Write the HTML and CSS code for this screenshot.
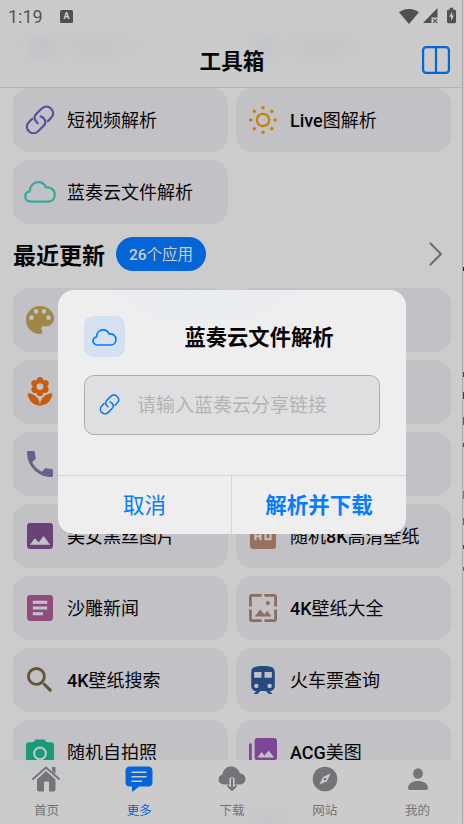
FILE: index.html
```html
<!DOCTYPE html>
<html lang="zh-CN">
<head>
<meta charset="utf-8">
<title>工具箱</title>
<link rel="stylesheet" href="styles.css">
</head>
<body>
<svg class="defs" aria-hidden="true">
  <symbol id="link" viewBox="0 0 30 30"><g fill="none" stroke="currentColor" stroke-width="2.200" stroke-linecap="round" stroke-linejoin="round"><path d="M12.7 18.2 10.9 16.1C8.7 13.5 9.4 10.8 11.4 8.8L16.5 3.7C19.2 1 23.1.8 25.9 3.5 28.8 6.3 28.8 10.1 26.2 12.8L22.9 16.1"/><path d="M7.2 13.8 3.8 17.2C1.1 19.9 1.2 23.7 3.9 26.3 6.6 28.9 10.5 28.9 13.2 26.2L18.4 21C20.8 18.6 21 15.8 18.8 13.4 17.8 12.3 17 11.6 15.6 11.4"/></g></symbol>
  <symbol id="cloud" viewBox="0 0 32 22"><path d="M7.5 20.7C3.8 20.7 1.2 18.7 1.2 15.5 1.2 12.8 3 10.9 5.7 10.4 5.8 5 9.4 1.2 14.3 1.2 18.1 1.2 20.7 3.3 22 6.5 27 5.9 30.8 8.9 30.8 13.5 30.8 17.8 27.9 20.7 23.9 20.7Z" fill="none" stroke="currentColor" stroke-width="2.200" stroke-linejoin="round"/></symbol>
  <symbol id="sun" viewBox="0 0 30 30"><circle cx="15" cy="15" r="6.2" fill="none" stroke="currentColor" stroke-width="2.200"/><g fill="currentColor"><circle cx="15" cy="2.7" r="1.8"/><circle cx="15" cy="27.3" r="1.8"/><circle cx="2.7" cy="15" r="1.8"/><circle cx="27.3" cy="15" r="1.8"/><circle cx="6.3" cy="6.3" r="1.8"/><circle cx="23.7" cy="6.3" r="1.8"/><circle cx="6.3" cy="23.7" r="1.8"/><circle cx="23.7" cy="23.7" r="1.8"/></g></symbol>
  <symbol id="palette" viewBox="3 3 18 18"><path fill="currentColor" d="M12 3a9 9 0 0 0 0 18c.83 0 1.5-.67 1.5-1.500 0-.39-.15-.74-.39-1.010-.23-.26-.38-.61-.38-.99 0-.83.67-1.500 1.500-1.500H16c2.760 0 5-2.240 5-5 0-4.420-4.030-8-9-8zm-5.500 9a1.500 1.500 0 1 1 0-3 1.500 1.500 0 0 1 0 3zm3-4a1.500 1.500 0 1 1 0-3 1.500 1.500 0 0 1 0 3zm5 0a1.500 1.500 0 1 1 0-3 1.500 1.500 0 0 1 0 3zm3 4a1.500 1.500 0 1 1 0-3 1.500 1.500 0 0 1 0 3z"/></symbol>
  <symbol id="flower" viewBox="2.500 1 19 22"><path fill="currentColor" d="M12 22c4.970 0 9-4.030 9-9-4.970 0-9 4.030-9 9zM5.600 10.250c0 1.380 1.120 2.500 2.500 2.500.53 0 1.010-.16 1.420-.44l-.02.19c0 1.380 1.120 2.500 2.500 2.500s2.500-1.120 2.500-2.500l-.02-.19c.4.280.89.440 1.420.440 1.380 0 2.500-1.120 2.500-2.500 0-1-.59-1.850-1.430-2.250.84-.4 1.430-1.250 1.430-2.250 0-1.380-1.120-2.500-2.500-2.500-.53 0-1.010.16-1.420.44l.02-.19C14.500 2.120 13.380 1 12 1S9.500 2.120 9.500 3.500l.02.19c-.4-.28-.89-.44-1.420-.44-1.380 0-2.500 1.120-2.500 2.500 0 1 .59 1.850 1.430 2.250-.84.4-1.430 1.250-1.430 2.250zM12 5.500a2.500 2.500 0 1 1 0 5 2.500 2.500 0 0 1 0-5zM3 13c0 4.970 4.030 9 9 9 0-4.970-4.030-9-9-9z"/></symbol>
  <symbol id="phone" viewBox="3 3 18 18"><path fill="currentColor" d="M6.620 10.790c1.440 2.830 3.760 5.140 6.590 6.590l2.200-2.200c.27-.27.67-.36 1.020-.24 1.120.37 2.330.57 3.570.57.55 0 1 .45 1 1V20c0 .55-.45 1-1 1C10.610 21 3 13.390 3 4c0-.55.450-1 1-1h3.500c.55 0 1 .45 1 1 0 1.250.2 2.450.57 3.570.11.350.030.740-.25 1.020z"/></symbol>
  <symbol id="image" viewBox="3 3 18 18"><path fill="currentColor" d="M21 19V5c0-1.100-.9-2-2-2H5c-1.100 0-2 .9-2 2v14c0 1.100.9 2 2 2h14c1.100 0 2-.9 2-2zM8.500 13.500l2.500 3.010L14.500 12l4.500 6H5z"/></symbol>
  <symbol id="hd" viewBox="3 3 18 18"><path fill="currentColor" fill-rule="evenodd" d="M19 3H5a2 2 0 0 0-2 2v14c0 1.100.9 2 2 2h14a2 2 0 0 0 2-2V5a2 2 0 0 0-2-2zM11 15H9.500v-2h-2v2H6V9h1.500v2.500h2V9H11zm2-6h4a1 1 0 0 1 1 1v4a1 1 0 0 1-1 1h-4zm1.500 4.500h2v-3h-2z"/></symbol>
  <symbol id="article" viewBox="3 3 18 18"><path fill="currentColor" d="M19 3H5c-1.100 0-2 .9-2 2v14c0 1.100.9 2 2 2h14c1.100 0 2-.9 2-2V5c0-1.100-.9-2-2-2zM14 17H7v-2h7zm3-4H7v-2h10zm0-4H7V7h10z"/></symbol>
  <symbol id="wallpaper" viewBox="2 2 20 20"><path fill="currentColor" d="M4 4h7V2H4c-1.100 0-2 .9-2 2v7h2zm6 9-4 5h12l-3-4-2.030 2.710zm7-4.500a1.500 1.500 0 1 0-3 0 1.500 1.500 0 0 0 3 0zM20 2h-7v2h7v7h2V4c0-1.100-.9-2-2-2zm0 18h-7v2h7c1.100 0 2-.9 2-2v-7h-2zM4 13H2v7c0 1.100.9 2 2 2h7v-2H4z"/></symbol>
  <symbol id="search" viewBox="3 3 18 18"><path fill="currentColor" d="M15.500 14h-.79l-.28-.27A6.470 6.470 0 0 0 16 9.500 6.500 6.500 0 1 0 9.500 16c1.610 0 3.090-.59 4.230-1.570l.27.28v.79l5 4.990L20.490 19zm-6 0a4.500 4.500 0 1 1 0-9 4.500 4.500 0 0 1 0 9z"/></symbol>
  <symbol id="train" viewBox="4 2 16 19"><path fill="currentColor" d="M12 2c-4.420 0-8 .5-8 4v9.500C4 17.430 5.570 19 7.500 19L6 20.500v.5h2.230l2-2H14l2 2h2v-.5L16.500 19c1.930 0 3.500-1.570 3.500-3.500V6c0-3.500-3.580-4-8-4zM7.500 17a1.500 1.500 0 1 1 0-3 1.500 1.500 0 0 1 0 3zM11 10H6V6h5zm2 0V6h5v4zm3.500 7a1.500 1.500 0 1 1 0-3 1.500 1.500 0 0 1 0 3z"/></symbol>
  <symbol id="camera" viewBox="2 2 20 18"><path fill="currentColor" fill-rule="evenodd" d="M9 2 7.170 4H4c-1.100 0-2 .9-2 2v12c0 1.100.9 2 2 2h16c1.100 0 2-.9 2-2V6c0-1.100-.9-2-2-2h-3.170L15 2zm3 15a5 5 0 1 1 0-10 5 5 0 0 1 0 10z"/><circle cx="12" cy="12" r="3.400" fill="currentColor"/></symbol>
  <symbol id="album" viewBox="2 2 20 20"><path fill="currentColor" d="M22 16V4c0-1.100-.9-2-2-2H8c-1.100 0-2 .9-2 2v12c0 1.100.9 2 2 2h12c1.100 0 2-.9 2-2zm-11-4 2.030 2.710L16 11l4 5H8zM2 6v14c0 1.100.9 2 2 2h14v-2H4V6z"/></symbol>
</svg>
<div class="device">
  <div class="screen">
    <header>
      <div class="status">
        <span class="time">1:19</span>
        <span class="input-mode">A</span>
        <svg class="wifi" viewBox="0 0 20 15"><path fill="#505050" d="M0 3.200C5.600-1.100 14.400-1.100 20 3.200L10 15z"/></svg>
        <svg class="signal" viewBox="0 0 16 16"><path fill="#505050" d="M14.500 0V9.500H8.500V15H0z"/><path stroke="#606060" stroke-width="1.200" d="M10.200 11l4 4m0-4l-4 4"/></svg>
        <svg class="battery" viewBox="0 0 10 17"><path fill="#505050" d="M3 0h4v2h1.500Q10 2 10 3.500v12Q10 17 8.500 17h-7Q0 17 0 15.500v-12Q0 2 1.500 2H3z"/><path fill="#ccc" d="M5.800 4 2.500 10h2v4.500l3.200-6H5.800z"/></svg>
      </div>
      <div class="titlebar">
        <h1>工具箱</h1>
        <svg class="columns" viewBox="0 0 28 28"><g fill="none" stroke="#0365d6" stroke-width="2.200"><rect x="1.100" y="1.100" width="25.800" height="25.800" rx="3.200"/><path d="M14 1v26"/></g></svg>
      </div>
    </header>
    <main>
      <div class="grid">
        <div class="card"><svg class="ic i30 indigo"><use href="#link"/></svg><span>短视频解析</span></div>
        <div class="card"><svg class="ic i30 amber"><use href="#sun"/></svg><span><b>Live</b>图解析</span></div>
        <div class="card"><svg class="ic icloud teal"><use href="#cloud"/></svg><span>蓝奏云文件解析</span></div>
      </div>
      <div class="section">
        <h2>最近更新</h2><span class="count"><b>26</b>个应用</span>
        <svg class="chevron" viewBox="0 0 14 24"><path d="M1.500 1.500 12 12 1.500 22.500" fill="none" stroke="#707074" stroke-width="2.200" stroke-linecap="round" stroke-linejoin="round"/></svg>
      </div>
      <div class="grid">
        <div class="card"><svg class="ic i28 gold"><use href="#palette"/></svg></div>
        <div class="card"></div>
        <div class="card"><svg class="ic iflower orange"><use href="#flower"/></svg></div>
        <div class="card"></div>
        <div class="card"><svg class="ic i26 violet"><use href="#phone"/></svg></div>
        <div class="card"></div>
        <div class="card"><svg class="ic i26 plum"><use href="#image"/></svg><span>美女黑丝图片</span></div>
        <div class="card"><svg class="ic i26 brown"><use href="#hd"/></svg><span>随机<b>8K</b>高清壁纸</span></div>
        <div class="card"><svg class="ic i26 pink"><use href="#article"/></svg><span>沙雕新闻</span></div>
        <div class="card"><svg class="ic i28 taupe"><use href="#wallpaper"/></svg><span><b>4K</b>壁纸大全</span></div>
        <div class="card"><svg class="ic i26 olive"><use href="#search"/></svg><span><b>4K</b>壁纸搜索</span></div>
        <div class="card"><svg class="ic itrain navy"><use href="#train"/></svg><span>火车票查询</span></div>
        <div class="card"><svg class="ic icamera green"><use href="#camera"/></svg><span>随机自拍照</span></div>
        <div class="card"><svg class="ic i28 purple"><use href="#album"/></svg><span><b>ACG</b>美图</span></div>
      </div>
    </main>
    <nav>
      <a><svg viewBox="0 0 28 26"><path d="M1 13 14 1.500 27 13" fill="none" stroke="currentColor" stroke-width="1.900" stroke-linecap="round" stroke-linejoin="round"/><path fill="currentColor" d="M20 1h3.500v7L20 5zM14 5l9.500 8.500V23q0 2.500-2.500 2.500h-4V16.500q0-1-1-1h-3q-1 0-1 1v9H7.500Q5 25.500 5 23V13.500z"/></svg>首页</a>
      <a class="active"><svg viewBox="0 0 28 26"><path fill="currentColor" d="M5 .5h18Q27.500.5 27.500 5v11q0 4.500-4.500 4.500h-9L8 25.500q-1 .3-1-1v-4H5Q.5 20.500.5 16V5Q.5.500 5 .5z"/><path d="M7 6.200h14M7 10.800h14M7 15.300h9.500" stroke="#ccc" stroke-width="1.400" stroke-linecap="round"/></svg>更多</a>
      <a><svg viewBox="0 0 28 26"><path fill="currentColor" d="M6.500 18.500C2.500 18.500.5 16.200.5 13.300.5 10.800 2 9 4.400 8.400 5.200 3.600 8.600.5 13 .5c4.500 0 7.700 2.700 9 7 3.400.3 5.500 2.500 5.500 5.500s-2.400 5.500-6 5.500h-5v-6.200q0-1-2.500-1t-2.500 1v6.200z"/><path d="M14 13v11m-4-4 4 4 4-4" fill="none" stroke="currentColor" stroke-width="2" stroke-linecap="round" stroke-linejoin="round"/></svg>下载</a>
      <a><svg viewBox="0 0 28 26"><circle cx="14" cy="13" r="12.300" fill="currentColor"/><path fill="#ccc" fill-rule="evenodd" d="M19.500 7.500 16 15.200 8.500 18.500 12 11zM14 11.700a1.400 1.400 0 1 0 0 2.800 1.400 1.400 0 0 0 0-2.800z"/></svg>网站</a>
      <a><svg viewBox="0 0 28 26"><ellipse cx="14" cy="7.500" rx="4.900" ry="5.300" fill="currentColor"/><path fill="currentColor" d="M4 21.500C4.600 17.300 8.500 15 14 15s9.400 2.300 10 6.500q.2 2.500-2 2.500H6q-2.200 0-2-2.500z"/></svg>我的</a>
    </nav>
    <section class="dialog" role="dialog">
      <div class="dialog-body">
        <div class="dialog-head">
          <span class="tile"><svg><use href="#cloud"/></svg></span>
          <h3>蓝奏云文件解析</h3>
        </div>
        <div class="field"><svg><use href="#link"/></svg><span>请输入蓝奏云分享链接</span></div>
      </div>
      <div class="actions"><button>取消</button><button class="primary">解析并下载</button></div>
    </section>
  </div>
  <div class="edge"></div>
</div>
</body>
</html>
```
FILE: styles.css
```css
* { box-sizing: border-box; margin: 0; }
body { width: 464px; height: 824px; overflow: hidden; background: #ccc; color: #060608; font-family: Roboto, "Noto Sans CJK SC", sans-serif; }
b { font-weight: 500; }
.defs { position: absolute; width: 0; height: 0; }
svg { display: block; flex: none; }
.device { display: flex; height: 824px; }
.screen { position: relative; display: flex; flex-direction: column; width: 462px; height: 824px; overflow: hidden; background: #ccc; }
.edge { width: 2px; border-left: 1px solid #aaa; background: linear-gradient(#ccc 267px, #222 267px 271px, #ccc 271px 372px, #444 372px 377px, #ccc 377px 392px, #24456f 392px 399px, #ccc 399px 417px, #75438c 417px 425px, #ccc 425px 443px, #46468a 443px 447px, #ccc 447px 491px, #7a68a8 491px 499px, #ccc 499px 518px, #378b45 518px 525px, #ccc 525px 545px, #3c4076 545px 549px, #ccc 549px 567px, #835f4c 567px 571px, #ccc 571px); }

header { height: 88px; flex: none; border-bottom: 1px solid #b5b5b7; background: radial-gradient(ellipse 27px 24px at 40px 47px, #c6c2c8, transparent), radial-gradient(ellipse 65px 22px at 95px 47px, #c5c5c6, transparent), radial-gradient(ellipse 25px 24px at 264px 47px, #c1c5ca, transparent), radial-gradient(ellipse 60px 22px at 322px 47px, #c5c5c6, transparent), #cbcbcb; }
.status { display: flex; align-items: center; height: 32px; padding: 0 6px 0 8px; color: #555; }
.time { width: 52px; font-size: 18px; }
.input-mode { width: 13px; height: 13px; margin-right: auto; border-radius: 1.500px; background: #505050; color: #d5d5d5; font: 700 9px/13px Roboto, sans-serif; text-align: center; }
.wifi { width: 20px; height: 15px; margin-right: 4px; }
.signal { width: 16px; height: 16px; margin-right: 8px; }
.battery { width: 9px; height: 17px; margin-top: -2px; }
.titlebar { display: grid; grid-template-columns: 28px 1fr 28px; align-items: center; height: 56px; padding: 0 12px 0 14px; }
h1 { grid-column: 2; padding-top: 3px; font-size: 21.600px; line-height: 33px; text-align: center; }
.columns { width: 28px; height: 28px; margin-left: -.500px; }

main { flex: none; height: 672px; overflow: hidden; padding: 0 11px 0 13px; }
.grid { display: grid; grid-template-columns: 215px 215px; grid-auto-rows: 64px; gap: 8px; }
.card { display: flex; align-items: center; gap: 11px; padding-left: 11px; border-radius: 16px; background: #c2c1c6; font-size: 18px; }
.card span { padding-top: 2px; line-height: 26px; white-space: nowrap; }
.ic { width: 26px; height: 26px; margin: 0 3px; }
.i30 { width: 30px; height: 30px; margin: 0 1px; }
.i28 { width: 28px; height: 28px; margin: 0 2px; }
.icloud { width: 32px; height: 22px; margin: 0; }
.iflower { width: 26px; height: 30px; }
.itrain { width: 24px; height: 28px; margin: 0 4px; }
.icamera { width: 28px; height: 26px; margin: 0 2px; }
.indigo { color: #4c559f; } .amber { color: #c9810c; } .teal { color: #3aa99b; } .gold { color: #9f8748; }
.orange { color: #c65c0c; } .violet { color: #6a5f8d; } .plum { color: #6b4179; } .brown { color: #99705d; }
.pink { color: #914c7e; } .taupe { color: #8e6c60; } .olive { color: #635634; } .navy { color: #254a7d; }
.green { color: #169a78; } .purple { color: #7c4796; }
.section { display: flex; align-items: center; height: 63.500px; padding: 0 8px 3px 0; }
h2 { margin-right: 11px; padding-top: 5px; font-size: 23px; line-height: 34px; }
.count { width: 90px; height: 34px; border-radius: 17px; background: #0365d6; color: #ccc; font-size: 15.500px; line-height: 36px; text-align: center; }
.chevron { width: 14px; height: 24px; margin-left: auto; }

nav { display: grid; grid-template-columns: repeat(5, 92.800px); height: 64px; border-radius: 0 0 12px 12px; background: radial-gradient(ellipse 70px 40px at 40px 0, #c5caca, transparent), radial-gradient(ellipse 35px 30px at 267px 64px, #c6c6ca, transparent), #cbcbcb; }
nav a { display: flex; flex-direction: column; align-items: center; gap: 7px; padding-top: 6px; color: #747478; font-size: 12.500px; line-height: 24px; }
nav svg { width: 28px; height: 26px; }
nav .active { color: #0365d6; }

.dialog { position: absolute; left: 58px; top: 290px; display: flex; flex-direction: column; width: 348px; height: 244px; overflow: hidden; border-radius: 16px; background: radial-gradient(ellipse 110px 50px at 145px 0, #e8ecf1, transparent), #eeeeef; }
.dialog-body { height: 185px; padding: 26px; }
.dialog-head { display: flex; height: 41px; }
.tile { display: grid; place-items: center; width: 41px; height: 41px; border-radius: 9px; background: #d5e1f1; color: #087cff; }
.tile svg { width: 25px; height: 17px; margin-top: 2px; }
h3 { flex: 1; padding-left: 13px; padding-top: 2px; font-size: 21.300px; line-height: 40px; text-align: center; }
.field { display: flex; align-items: center; height: 60px; margin-top: 18px; padding: 0 0 2px 14px; border: 1px solid #adadaf; border-radius: 10px; background: #dfdfe1; color: #b3b3b5; font-size: 19px; }
.field span { padding-bottom: 1px; }
.field svg { width: 21px; height: 21px; margin-right: 17px; color: #087cff; }
.actions { display: grid; grid-template-columns: 173px 1fr; height: 59px; border-top: 1px solid #d5d5d8; }
button { padding: 0 0 3px; border: 0; background: none; color: #087cff; font: 400 21.500px Roboto, "Noto Sans CJK SC", sans-serif; }
.primary { border-left: 1px solid #d5d5d8; font-weight: 700; }
```
